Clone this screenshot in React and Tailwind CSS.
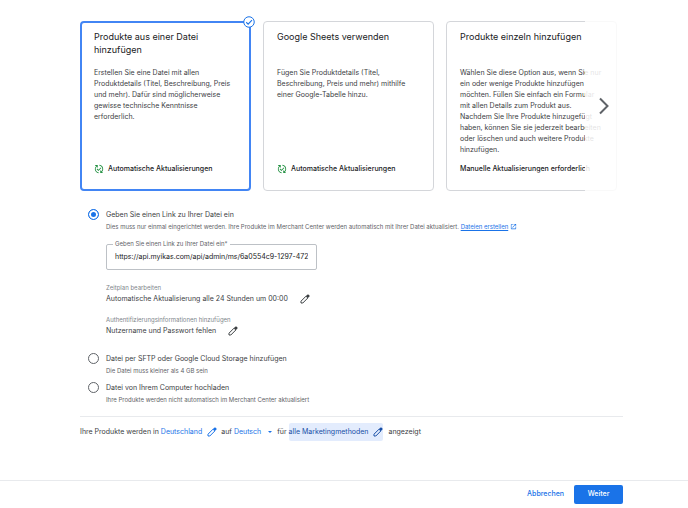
import React, { useState } from 'react';
import { MdOutlinePublishedWithChanges, MdOpenInNew } from 'react-icons/md';

const methods = [
  {
    id: 'file',
    title: 'Produkte aus einer Datei hinzufügen',
    text: 'Erstellen Sie eine Datei mit allen Produktdetails (Titel, Beschreibung, Preis und mehr). Dafür sind möglicherweise gewisse technische Kenntnisse erforderlich.',
    note: 'Automatische Aktualisierungen',
    automatic: true,
  },
  {
    id: 'sheets',
    title: 'Google Sheets verwenden',
    text: 'Fügen Sie Produktdetails (Titel, Beschreibung, Preis und mehr) mithilfe einer Google-Tabelle hinzu.',
    note: 'Automatische Aktualisierungen',
    automatic: true,
  },
  {
    id: 'single',
    title: 'Produkte einzeln hinzufügen',
    text: 'Wählen Sie diese Option aus, wenn Sie nur ein oder wenige Produkte hinzufügen möchten. Füllen Sie einfach ein Formular mit allen Details zum Produkt aus. Nachdem Sie Ihre Produkte hinzugefügt haben, können Sie sie jederzeit bearbeiten oder löschen und auch weitere Produkte hinzufügen.',
    note: 'Manuelle Aktualisierungen erforderlich',
    automatic: false,
  },
];

const PencilIcon = () => (
  <svg viewBox="0 0 20 20" className="size-[10px] shrink-0" fill="none" aria-hidden="true">
    <path d="M2 18v-3.6L12 4.4l3.6 3.6L5.6 18z" stroke="currentColor" strokeWidth="2" strokeLinejoin="round" />
    <path d="M11.8 4.2l2.8-2.8c.8-.8 1.9-.8 2.7 0l1.3 1.3c.8.8.8 1.9 0 2.7L15.8 8.2z" fill="currentColor" />
  </svg>
);

const CheckBadge = () => (
  <svg viewBox="0 0 24 24" className="absolute -top-[7px] -right-[6px] size-3" aria-hidden="true">
    <circle cx="12" cy="12" r="10.5" fill="#fff" stroke="#1a73e8" strokeWidth="2" />
    <path d="M6.5 12.5l3.7 3.7L18 8.3" fill="none" stroke="#1a73e8" strokeWidth="2.2" />
  </svg>
);

const MethodCard = ({ method, selected, onSelect }) => (
  <button
    type="button"
    aria-pressed={selected}
    onClick={() => onSelect(method.id)}
    className={`relative flex h-[170px] w-[171px] shrink-0 flex-col rounded-sm bg-white text-left ${
      selected ? 'border-2 border-[#4285f4] px-3 py-[7px]' : 'border border-[#d4d6da] px-[13px] py-2'
    }`}
  >
    <span className="block h-[37px] text-[9px] leading-[13px] text-[#202124]">{method.title}</span>
    <span className="block text-[7px] leading-[11px] text-[#3c4043]">{method.text}</span>
    <span className="mt-auto mb-[7px] flex h-3 items-center gap-1 text-[7px] font-medium whitespace-nowrap text-[#202124]">
      {method.automatic && <MdOutlinePublishedWithChanges className="size-[10px] text-[#1e8e3e]" />}
      {method.note}
    </span>
    {selected && <CheckBadge />}
  </button>
);

const SourceOption = ({ id, label, hint, source, onChange, children }) => (
  <div className="flex gap-[7px]">
    <input
      type="radio"
      id={id}
      name="source"
      checked={source === id}
      onChange={() => onChange(id)}
      className="size-[11px] shrink-0 appearance-none rounded-full border border-[#5f6368] bg-white checked:border-[#1a73e8] checked:bg-[#1a73e8] checked:shadow-[inset_0_0_0_2px_white]"
    />
    <div className="min-w-0 flex-1">
      <label htmlFor={id} className="block text-[7px] leading-3 text-[#3c4043]">{label}</label>
      <p className="text-[6px] leading-[11px] text-[#5f6368]">{hint}</p>
      {children}
    </div>
  </div>
);

const EditableRow = ({ caption, value }) => (
  <div>
    <p className="text-[6px] leading-[10px] text-[#80868b]">{caption}</p>
    <div className="flex h-3 items-center gap-3 text-[7px] text-[#3c4043]">
      <span>{value}</span>
      <button type="button" aria-label={caption}>
        <PencilIcon />
      </button>
    </div>
  </div>
);

const App = () => {
  const [method, setMethod] = useState('file');
  const [source, setSource] = useState('link');
  const [url, setUrl] = useState('https://api.myikas.com/api/admin/ms/6a0554c9-1297-4727');

  return (
    <div className="flex min-h-screen flex-col bg-white font-['Inter',sans-serif] text-[#3c4043]">
      <main className="flex-1 pr-[65px] pl-20">
        {/* Method carousel */}
        <section className="relative">
          <div className="flex gap-3 overflow-hidden pt-[21px]">
            {methods.map((m) => (
              <MethodCard key={m.id} method={m} selected={method === m.id} onSelect={setMethod} />
            ))}
          </div>
          <button
            type="button"
            aria-label="Weiter blättern"
            className="absolute top-5 right-0 bottom-0 flex w-[38px] items-center justify-center bg-white/85 text-[#5f6368]"
          >
            <svg viewBox="0 0 12 18" className="h-[18px] w-3" fill="none" stroke="currentColor" strokeWidth="2" aria-hidden="true">
              <path d="M2 1.5l7.5 7.5L2 16.5" />
            </svg>
          </button>
        </section>

        {/* Data source */}
        <section className="flex flex-col gap-[6px] border-b border-[#e8eaed] pt-[18px] pb-[11px] pl-2">
          <SourceOption
            id="link"
            label="Geben Sie einen Link zu Ihrer Datei ein"
            source={source}
            onChange={setSource}
            hint={
              <>
                Dies muss nur einmal eingerichtet werden. Ihre Produkte im Merchant Center werden automatisch mit Ihrer Datei aktualisiert.{' '}
                <a href="#dateien" className="text-[#1a73e8] underline">
                  Dateien erstellen
                  <MdOpenInNew className="ml-[2px] inline size-[7px] align-[-1px]" />
                </a>
              </>
            }
          >
            <fieldset className="mt-2 h-[30px] w-[211px] rounded-xs border border-[#bdc1c6] px-[6px]">
              <legend className="px-[2px] text-[6px] leading-2 text-[#5f6368]">
                <label htmlFor="url">Geben Sie einen Link zu Ihrer Datei ein*</label>
              </legend>
              <input
                id="url"
                type="text"
                value={url}
                onChange={(e) => setUrl(e.target.value)}
                className="mx-[2px] block h-4 w-[193px] bg-transparent text-[7px] text-[#202124] outline-none"
              />
            </fieldset>
            <div className="flex flex-col gap-[10px] pt-[13px] pb-[10px]">
              <EditableRow caption="Zeitplan bearbeiten" value="Automatische Aktualisierung alle 24 Stunden um 00:00" />
              <EditableRow caption="Authentifizierungsinformationen hinzufügen" value="Nutzername und Passwort fehlen" />
            </div>
          </SourceOption>
          <SourceOption
            id="sftp"
            label="Datei per SFTP oder Google Cloud Storage hinzufügen"
            hint="Die Datei muss kleiner als 4 GB sein"
            source={source}
            onChange={setSource}
          />
          <SourceOption
            id="upload"
            label="Datei von Ihrem Computer hochladen"
            hint="Ihre Produkte werden nicht automatisch im Merchant Center aktualisiert"
            source={source}
            onChange={setSource}
          />
        </section>

        {/* Where the products are shown */}
        <div className="flex items-center pt-[6px] text-[7px] whitespace-nowrap">
          <span>Ihre Produkte werden in</span>
          <button type="button" className="ml-[2px] flex items-center gap-[5px] text-[#1a73e8]">
            Deutschland
            <PencilIcon />
          </button>
          <span className="ml-1">auf</span>
          <button type="button" className="ml-[2px] flex items-center gap-[7px] text-[#1a73e8]">
            Deutsch
            <svg viewBox="0 0 8 4" className="h-[2px] w-1" fill="currentColor" aria-hidden="true">
              <path d="M0 0h8L4 4z" />
            </svg>
          </button>
          <span className="ml-[5px]">für</span>
          <button type="button" className="ml-[2px] flex h-[18px] items-center gap-[5px] rounded-xs bg-[#e3ecfd] text-[#174ea6]">
            alle Marketingmethoden
            <PencilIcon />
          </button>
          <span className="ml-[5px]">angezeigt</span>
        </div>
      </main>

      <footer className="flex items-center justify-end gap-[10px] border-t border-[#e8eaed] pt-1 pr-[65px] pb-1 text-[7px] font-medium">
        <button type="button" className="text-[#1a73e8]">Abbrechen</button>
        <button type="button" className="h-[19px] w-[49px] rounded-xs bg-[#1a73e8] text-white">Weiter</button>
      </footer>
    </div>
  );
};

export default App;
